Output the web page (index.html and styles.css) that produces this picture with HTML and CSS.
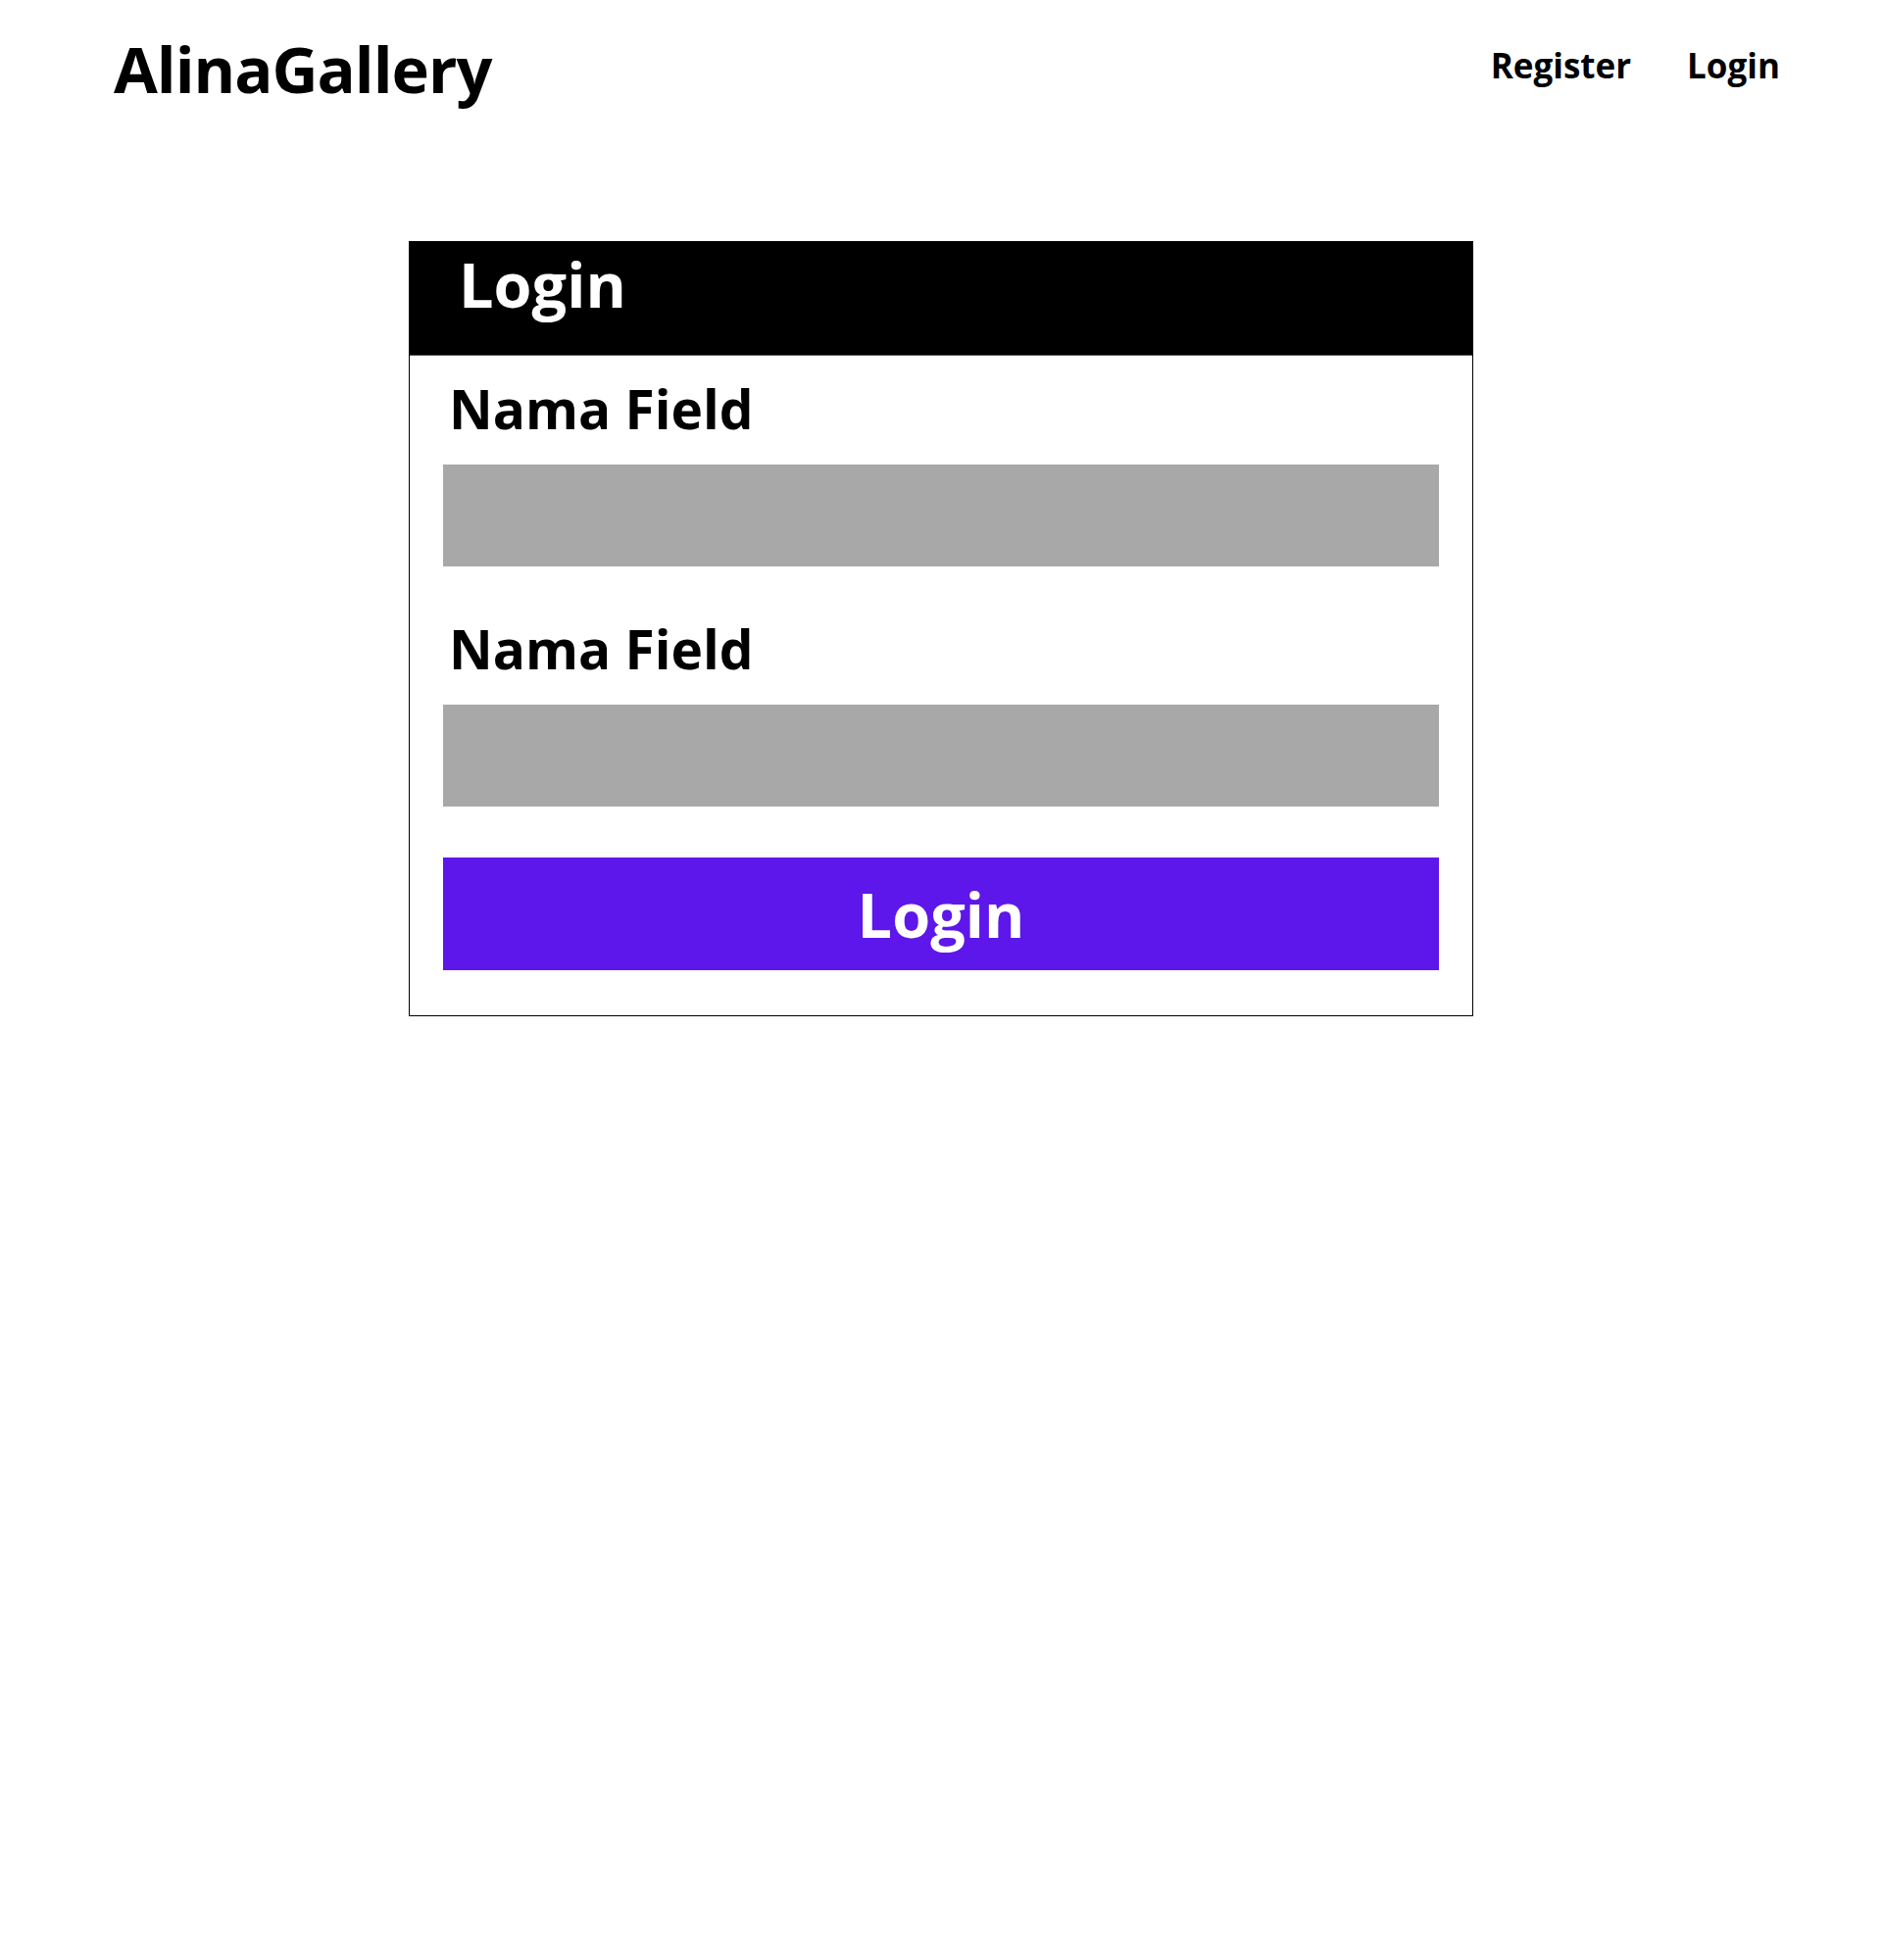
FILE: index.html
```html
<!DOCTYPE html>
<html lang="id">
<head>
<meta charset="utf-8">
<title>AlinaGallery - Login</title>
<link rel="stylesheet" href="styles.css">
</head>
<body>
<header class="topbar">
  <div class="brand">AlinaGallery</div>
  <nav class="nav">
    <a href="#" class="nav-link">Register</a>
    <a href="#" class="nav-link">Login</a>
  </nav>
</header>
<main class="main">
  <section class="card">
    <div class="card-head">Login</div>
    <form class="card-body">
      <label class="label">Nama Field</label>
      <div class="input"></div>
      <label class="label label-2">Nama Field</label>
      <div class="input"></div>
      <button type="button" class="btn">Login</button>
    </form>
  </section>
</main>
</body>
</html>
```
FILE: styles.css
```css
* { box-sizing: border-box; }
html, body { margin: 0; padding: 0; background: #fff; }
body {
  font-family: "Open Sans", "Noto Sans", sans-serif;
  font-weight: 700;
  color: #000;
}
.topbar {
  display: flex;
  justify-content: space-between;
  align-items: center;
  padding: 24px 104px 0 116px;
  height: 116px;
}
.brand {
  font-size: 65px;
  line-height: 1;
  letter-spacing: -1px;
}
.nav {
  display: flex;
  gap: 57px;
  margin-top: -8px;
}
.nav-link {
  font-size: 35px;
  color: #000;
  text-decoration: none;
}
.main {
  display: flex;
  justify-content: center;
  padding-top: 130px;
}
.card {
  width: 1086px;
  border: 1px solid #000;
}
.card-head {
  background: #000;
  color: #fff;
  height: 116px;
  font-size: 63px;
  line-height: 1;
  padding: 11px 0 0 50px;
  border-bottom: 1px solid #555;
}
.card-body {
  display: flex;
  flex-direction: column;
  padding: 16px 34px 46px 34px;
  margin: 0;
}
.label {
  font-size: 55px;
  line-height: 76px;
  padding-left: 6px;
}
.label-2 { margin-top: 46px; }
.input {
  height: 104px;
  background: #a8a8a8;
  margin-top: 19px;
}
.btn {
  margin-top: 52px;
  height: 115px;
  border: 0;
  background: #5d17ea;
  color: #fff;
  font-family: inherit;
  font-weight: 700;
  font-size: 63px;
  padding: 0;
  cursor: pointer;
}
```
